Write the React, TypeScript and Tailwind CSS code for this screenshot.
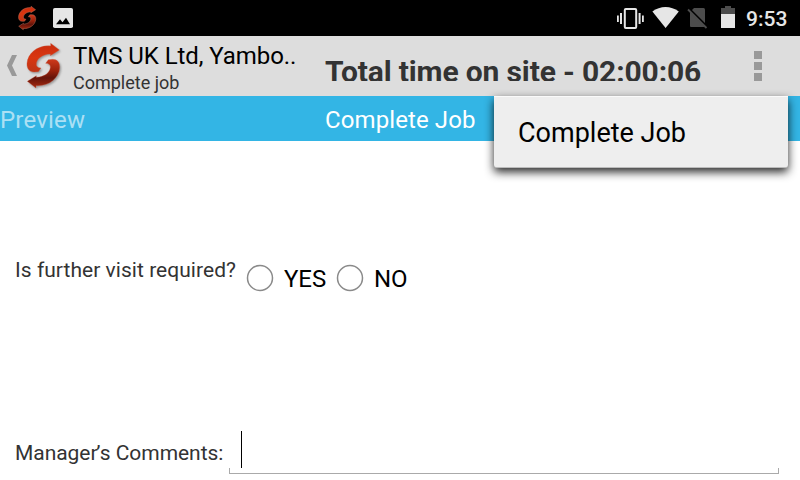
import React from "react";

const UPPER =
  "M148 42 L122 22 L122 30 C84 26 53 52 51 82 C50 98 58 108 72 108 L85 107 L93 96 C83 96 78 91 79 84 C80 68 97 55 121 54 L121 59 Z";
const LOWER =
  "M52 136 L78 156 L78 149 C116 152 147 126 149 96 C150 80 142 70 128 70 L115 71 L107 82 C117 82 122 87 121 94 C120 110 103 123 79 124 L79 119 Z";

function Logo({ id, className, shadow }: { id: string; className: string; shadow?: boolean }) {
  return (
    <svg viewBox="45 15 114 148" className={className} aria-hidden="true">
      <defs>
        <linearGradient id={id + "-a"} x1="0" y1="0" x2="0" y2="1">
          <stop offset="0" stopColor="#c92c0e" />
          <stop offset="0.5" stopColor="#d93610" />
          <stop offset="1" stopColor="#bd3516" />
        </linearGradient>
        <linearGradient id={id + "-b"} x1="0" y1="0" x2="0" y2="1">
          <stop offset="0" stopColor="#cf3a1c" />
          <stop offset="0.4" stopColor="#9a220c" />
          <stop offset="0.65" stopColor="#64140a" />
          <stop offset="1" stopColor="#a82a10" />
        </linearGradient>
        <filter id={id + "-s"} x="-20%" y="-20%" width="140%" height="140%">
          <feGaussianBlur stdDeviation="2.5" />
        </filter>
      </defs>
      {shadow && (
        <g filter={`url(#${id}-s)`} transform="translate(4 4)" fill="#777" opacity="0.7">
          <path d={UPPER} />
          <path d={LOWER} />
        </g>
      )}
      <g stroke={shadow ? "#cc5a42" : "#c87860"} strokeWidth={shadow ? 1 : 2.5} strokeLinejoin="round">
        <path d={UPPER} fill={`url(#${id}-a)`} />
        <path d={LOWER} fill={`url(#${id}-b)`} />
      </g>
    </svg>
  );
}

function StatusBar() {
  return (
    <div className="flex h-9 bg-black">
      <Logo id="small" className="mt-[5px] ml-[17px] h-[26px] w-[21px]" />
      <svg viewBox="0 0 20 20" className="mt-2 ml-[15px] size-5">
        <rect width="20" height="20" rx="1.8" fill="#e6e6e6" />
        <path d="M3 16.3 L7 11.2 L9.5 14.2 L13 9.7 L17 16.3 Z" fill="#000" />
      </svg>
      <div className="flex-1" />
      <svg viewBox="616 0 128 36" className="h-9 w-32" fill="#e6e6e6">
        <rect x="624.8" y="9" width="11.4" height="19" rx="1" fill="none" stroke="#e6e6e6" strokeWidth="2" />
        <path d="M620 13h2v11h-2zM617 15.5h1.8v6.5h-1.8zM638.6 13h2v11h-2zM642 15.5h1.8v6.5h-1.8z" />
        <path d="M652.4 11.6 C660 5.6 671 5.6 678.8 11.6 L665.6 28 Z" />
        <path d="M694 8 H703.5 Q705 8 705 9.5 V27 H691 Q690 27 690 26 V12 Z" fill="#4d4d4d" />
        <path d="M689.5 9 L707 26.5" stroke="#000" strokeWidth="2" />
        <path d="M688 9.5 L706.5 28" stroke="#4d4d4d" strokeWidth="1.8" />
        <path d="M725 6 H731 V8 H735 V14 H721 V8 H725 Z" fill="#4d4d4d" />
        <path d="M721 14H735V28H721Z" />
      </svg>
      <span className="mt-[6px] mr-[12px] ml-[2px] w-[42px] text-[21px] leading-[26px] font-medium whitespace-nowrap text-[#e6e6e6]">
        9:53
      </span>
    </div>
  );
}

function ActionBar() {
  return (
    <header className="flex h-[60px] bg-[#dddddd]">
      <svg viewBox="0 0 10 21" className="mt-[19px] ml-[7px] h-[21px] w-[10px]">
        <path d="M5 0 H10 L5 10.5 L10 21 H5 L0 10.5 Z" fill="#999" />
      </svg>
      <Logo id="large" shadow className="mt-[5px] ml-2 h-[49.33px] w-[38px]" />
      <div className="ml-[10px] w-[252px] whitespace-nowrap">
        <div className="mt-[5px] text-[24px] leading-[30px] tracking-[-0.06px] text-black">TMS UK Ltd, Yambo..</div>
        <div className="mt-px text-[18px] leading-[22px] text-[#333]">Complete job</div>
      </div>
      <div className="mt-[18px] h-[27px] w-[385px] overflow-hidden text-[30px] leading-[36px] font-bold tracking-[-0.14px] whitespace-nowrap text-[#333]">
        Total time on site - 02:00:06
      </div>
      <div className="mt-[15px] ml-[44px] flex flex-col gap-[3px]">
        <div className="size-2 bg-[#999]" />
        <div className="size-2 bg-[#999]" />
        <div className="size-2 bg-[#999]" />
      </div>
    </header>
  );
}

function Choice({ label }: { label: string }) {
  return (
    <label className="flex">
      <svg viewBox="0 0 28 28" className="size-7">
        <circle cx="14" cy="14" r="12.5" fill="none" stroke="#8a8a8a" strokeWidth="1.5" />
      </svg>
      <span className="mt-px ml-[10px] w-[42px] text-[24px] leading-7 tracking-[-0.05px] text-black">{label}</span>
    </label>
  );
}

export default function App() {
  return (
    <div className="relative flex h-[480px] w-[800px] flex-col overflow-hidden bg-white font-[Roboto,sans-serif]">
      <StatusBar />
      <ActionBar />
      <nav className="flex h-[45px] items-center bg-[#33b5e5] pt-[2px] text-[24px] leading-7 tracking-[0.1px] whitespace-nowrap">
        <span className="w-[325px] tracking-[0.2px] text-white/60">Preview</span>
        <span className="text-white">Complete Job</span>
      </nav>
      <main className="flex flex-1 flex-col">
        <div className="mt-[117px] flex h-[34px] pl-[15px]">
          <span className="w-[231px] text-[21px] leading-6 tracking-[0.04px] text-[#333] whitespace-nowrap">
            Is further visit required?
          </span>
          <div className="mt-[6px] flex gap-[10px]">
            <Choice label="YES" />
            <Choice label="NO" />
          </div>
        </div>
        <div className="mt-[139px] flex pl-[15px]">
          <span className="mt-[10px] w-[214px] text-[21px] leading-6 tracking-[-0.04px] text-[#333] whitespace-nowrap">
            Manager<span className="mr-[-0.8px] ml-[-1.2px]">’</span>s Comments:
          </span>
          <div className="flex h-[44px] w-[550px] flex-col">
            <div className="ml-3 h-[37px] w-px bg-black" />
            <div className="h-[6px] border-x border-b border-[#aaa]" />
          </div>
        </div>
      </main>
      <div className="absolute top-[96px] left-[494px] flex h-[72px] w-[294px] items-center rounded-b-[3px] border-t border-b border-t-[#fafafa] border-b-[#bbb] bg-[#eee] pt-[2px] pl-6 text-[27px] text-black shadow-[0_4px_10px_rgba(0,0,0,0.85)]">
        Complete Job
      </div>
    </div>
  );
}
